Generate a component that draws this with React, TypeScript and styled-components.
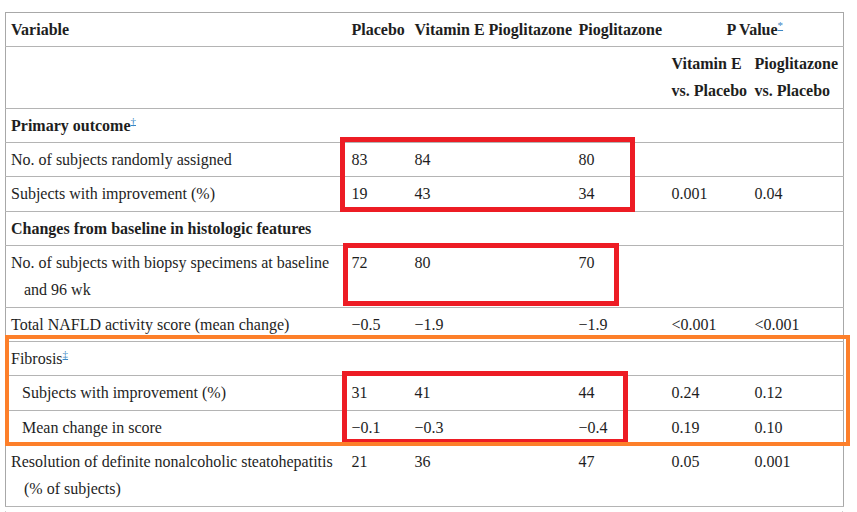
import React from "react";
import styled, { createGlobalStyle } from "styled-components";

const GlobalStyle = createGlobalStyle`
  html, body {
    margin: 0;
    padding: 0;
    background: #ffffff;
  }
  body {
    font-family: "Liberation Serif", "Times New Roman", serif;
    color: #1e1e1e;
  }
`;

const Page = styled.div`
  padding: 12px 0 0 5px;
  width: 852px;
`;

const Frame = styled.div`
  position: relative;
  width: 838px;
`;

const Table = styled.table`
  width: 838px;
  table-layout: fixed;
  border-collapse: collapse;
  border: 1px solid #a8a8a8;
  font-size: 16px;
`;

const Row = styled.tr`
  border-bottom: 1px solid #b4b4b4;
`;

const HeadCell = styled.th<{ $center?: boolean }>`
  text-align: ${(p) => (p.$center ? "center" : "left")};
  font-weight: bold;
  vertical-align: top;
  line-height: 27px;
  padding: 3px 5px 3.3px 5px;
  white-space: nowrap;
`;

const Cell = styled.td<{ $indent?: boolean; $bold?: boolean }>`
  vertical-align: top;
  line-height: 27px;
  padding: 3px 5px 3.4px ${(p) => (p.$indent ? "23px" : "18px")};
  text-indent: ${(p) => (p.$indent ? "-7px" : "-13px")};
  font-weight: ${(p) => (p.$bold ? "bold" : "normal")};
`;

const Num = styled.td`
  vertical-align: top;
  line-height: 27px;
  padding: 3px 5px 3.4px 5px;
  white-space: nowrap;
`;

const Note = styled.a`
  color: #3b87c4;
  font-size: 11px;
  font-weight: normal;
  vertical-align: super;
  line-height: 0;
  text-decoration: underline;
`;

const Mark = styled.div<{ $color: string; $w: number; $top: number; $left: number; $width: number; $height: number }>`
  position: absolute;
  top: ${(p) => p.$top}px;
  left: ${(p) => p.$left}px;
  width: ${(p) => p.$width}px;
  height: ${(p) => p.$height}px;
  border: ${(p) => p.$w}px solid ${(p) => p.$color};
  box-sizing: border-box;
  pointer-events: none;
`;

const NextTable = styled.div`
  margin-top: 4px;
  width: 838px;
  height: 8px;
  box-sizing: border-box;
  border-left: 1px solid #d0d0d0;
  border-right: 1px solid #d0d0d0;
`;

type DataRow = {
  label: string;
  values: string[];
  indent?: boolean;
};

const rows: DataRow[] = [
  { label: "No. of subjects randomly assigned", values: ["83", "84", "80", "", ""] },
  { label: "Subjects with improvement (%)", values: ["19", "43", "34", "0.001", "0.04"] },
];

const histo: DataRow[] = [
  { label: "No. of subjects with biopsy specimens at baseline and 96 wk", values: ["72", "80", "70", "", ""] },
  { label: "Total NAFLD activity score (mean change)", values: ["\u22120.5", "\u22121.9", "\u22121.9", "<0.001", "<0.001"] },
];

const fibrosis: DataRow[] = [
  { label: "Subjects with improvement (%)", values: ["31", "41", "44", "0.24", "0.12"], indent: true },
  { label: "Mean change in score", values: ["\u22120.1", "\u22120.3", "\u22120.4", "0.19", "0.10"], indent: true },
];

const last: DataRow = {
  label: "Resolution of definite nonalcoholic steatohepatitis (% of subjects)",
  values: ["21", "36", "47", "0.05", "0.001"],
};

const DataLine = ({ row }: { row: DataRow }) => (
  <Row>
    <Cell $indent={row.indent}>{row.label}</Cell>
    {row.values.map((v, i) => (
      <Num key={i}>{v}</Num>
    ))}
  </Row>
);

const Section = ({ children, bold = true }: { children: React.ReactNode; bold?: boolean }) => (
  <Row>
    <Cell $bold={bold} colSpan={6}>
      {children}
    </Cell>
  </Row>
);

export default function App() {
  return (
    <Page>
      <GlobalStyle />
      <Frame>
        <Table>
          <colgroup>
            <col style={{ width: 341 }} />
            <col style={{ width: 63 }} />
            <col style={{ width: 164 }} />
            <col style={{ width: 93 }} />
            <col style={{ width: 83 }} />
            <col style={{ width: 94 }} />
          </colgroup>
          <thead>
            <Row>
              <HeadCell>Variable</HeadCell>
              <HeadCell>Placebo</HeadCell>
              <HeadCell>Vitamin E Pioglitazone</HeadCell>
              <HeadCell>Pioglitazone</HeadCell>
              <HeadCell $center colSpan={2}>
                P Value<Note href="#n1">*</Note>
              </HeadCell>
            </Row>
            <Row>
              <HeadCell />
              <HeadCell />
              <HeadCell />
              <HeadCell />
              <HeadCell>
                Vitamin E
                <br />
                vs. Placebo
              </HeadCell>
              <HeadCell>
                Pioglitazone
                <br />
                vs. Placebo
              </HeadCell>
            </Row>
          </thead>
          <tbody>
            <Section>
              Primary outcome<Note href="#n2">†</Note>
            </Section>
            {rows.map((r) => (
              <DataLine key={r.label} row={r} />
            ))}
            <Section>Changes from baseline in histologic features</Section>
            {histo.map((r) => (
              <DataLine key={r.label} row={r} />
            ))}
            <Section bold={false}>
              Fibrosis<Note href="#n3">‡</Note>
            </Section>
            {fibrosis.map((r) => (
              <DataLine key={r.label} row={r} />
            ))}
            <DataLine row={last} />
          </tbody>
        </Table>

        <Mark $color="#ed1c24" $w={5} $top={125} $left={335} $width={295} $height={75} />
        <Mark $color="#ed1c24" $w={5} $top={231} $left={338} $width={276} $height={63} />
        <Mark $color="#ed1c24" $w={5} $top={359} $left={337} $width={286} $height={73} />
        <Mark $color="#fd7f2a" $w={4} $top={323} $left={0} $width={845} $height={111} />
        <NextTable />
      </Frame>
    </Page>
  );
}
